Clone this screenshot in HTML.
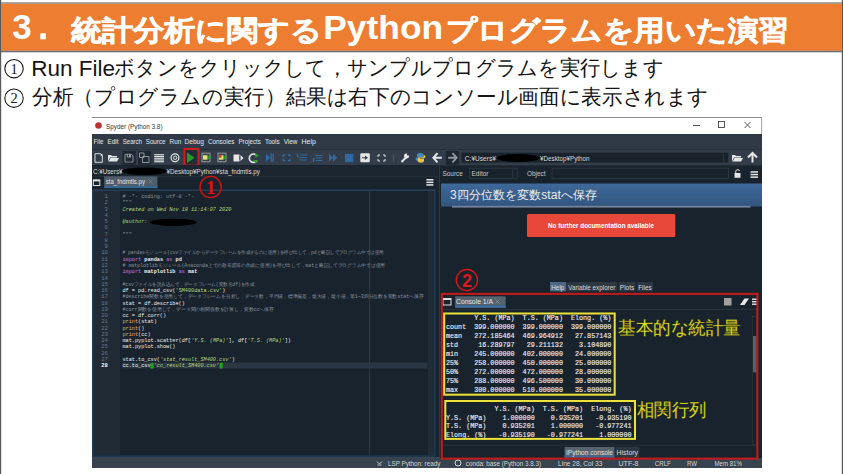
<!DOCTYPE html>
<html><head><meta charset="utf-8">
<style>
html,body{margin:0;padding:0;}
body{width:843px;height:474px;position:relative;overflow:hidden;background:#fff;font-family:"Liberation Sans",sans-serif;}
.a{position:absolute;}
</style></head><body>
<div class="a" style="left:0;top:0;width:1px;height:474px;background:#595959"></div>
<div class="a" style="left:842px;top:0;width:1px;height:474px;background:#595959"></div>
<svg class="a" style="left:0;top:0" width="843" height="474" viewBox="0 0 843 474"><rect x="0" y="0" width="1.2" height="474" fill="#5a5a5a" />
<rect x="841.8" y="0" width="1.2" height="474" fill="#5a5a5a" />
<rect x="1" y="2.3" width="841" height="1.5" fill="#858585" />
<rect x="1" y="3.8" width="841" height="47" fill="#ED7D31" />
<rect x="1" y="50.7" width="841" height="1.6" fill="#6f6f6f" />
<text x="12.3" y="39.4" font-family="Liberation Sans" font-size="35" fill="#ffffff" font-weight="bold">3</text>
<rect x="40.3" y="33.3" width="5.6" height="6" fill="#ffffff" />
<g transform="translate(70.8,39.6) scale(1,0.92)"><text x="0" y="0" font-family="Liberation Sans" font-size="30.5" fill="#ffffff" font-weight="bold" stroke="#ffffff" stroke-width="0.6" textLength="251" lengthAdjust="spacingAndGlyphs">統計分析に関する</text></g>
<text x="323.2" y="39.4" font-family="Liberation Sans" font-size="34" fill="#ffffff" font-weight="bold" textLength="120" lengthAdjust="spacingAndGlyphs">Python</text>
<g transform="translate(445.8,39.6) scale(1,0.92)"><text x="0" y="0" font-family="Liberation Sans" font-size="30.5" fill="#ffffff" font-weight="bold" stroke="#ffffff" stroke-width="0.6" textLength="342.5" lengthAdjust="spacingAndGlyphs">プログラムを用いた演習</text></g>
<circle cx="14" cy="68.7" r="9.2" fill="none" stroke="#1a1a1a" stroke-width="1.1"/>
<text x="14" y="73.6" font-family="Liberation Serif" font-size="14.5" fill="#1a1a1a" text-anchor="middle">1</text>
<circle cx="14" cy="98.2" r="9.2" fill="none" stroke="#1a1a1a" stroke-width="1.1"/>
<text x="14" y="103.1" font-family="Liberation Serif" font-size="14.5" fill="#1a1a1a" text-anchor="middle">2</text>
<text x="31.2" y="75.8" font-family="Liberation Sans" font-size="22.5" fill="#141414" >Run File</text>
<text x="114" y="74.6" font-family="Liberation Sans" font-size="20.8" fill="#141414" textLength="550" lengthAdjust="spacingAndGlyphs">ボタンをクリックして，サンプルプログラムを実行します</text>
<text x="32" y="104.4" font-family="Liberation Sans" font-size="20.8" fill="#141414" textLength="677" lengthAdjust="spacingAndGlyphs">分析（プログラムの実行）結果は右下のコンソール画面に表示されます</text>
<rect x="92" y="117" width="670" height="1" fill="#8c8c8c" />
<rect x="92" y="118" width="670" height="16" fill="#ffffff" />
<rect x="761.2" y="117" width="0.9" height="17" fill="#9a9a9a" />
<circle cx="98.5" cy="125.5" r="3.3" fill="#b83535"/>
<text x="106" y="128.6" font-family="Liberation Sans" font-size="7.3" fill="#333" textLength="56.5" lengthAdjust="spacingAndGlyphs">Spyder (Python 3.8)</text>
<rect x="693" y="125" width="7" height="0.9" fill="#444" />
<rect x="718.5" y="121.5" width="6" height="6" fill="none" stroke="#444" stroke-width="0.9"/>
<path d="M744.5 122 L750.5 128 M750.5 122 L744.5 128" fill="none" stroke="#444" stroke-width="0.9" />
<rect x="92" y="134" width="670" height="15" fill="#2f3a46" />
<rect x="92" y="149" width="670" height="1" fill="#27313b" />
<rect x="92" y="150" width="670" height="15" fill="#323d49" />
<text x="93.6" y="144.3" font-family="Liberation Sans" font-size="7.2" fill="#e8e8e8" textLength="9.8" lengthAdjust="spacingAndGlyphs">File</text>
<text x="107.5" y="144.3" font-family="Liberation Sans" font-size="7.2" fill="#e8e8e8" textLength="11" lengthAdjust="spacingAndGlyphs">Edit</text>
<text x="122.7" y="144.3" font-family="Liberation Sans" font-size="7.2" fill="#e8e8e8" textLength="19.3" lengthAdjust="spacingAndGlyphs">Search</text>
<text x="145.8" y="144.3" font-family="Liberation Sans" font-size="7.2" fill="#e8e8e8" textLength="19.6" lengthAdjust="spacingAndGlyphs">Source</text>
<text x="169.6" y="144.3" font-family="Liberation Sans" font-size="7.2" fill="#e8e8e8" textLength="11.6" lengthAdjust="spacingAndGlyphs">Run</text>
<text x="184.4" y="144.3" font-family="Liberation Sans" font-size="7.2" fill="#e8e8e8" textLength="19.6" lengthAdjust="spacingAndGlyphs">Debug</text>
<text x="208" y="144.3" font-family="Liberation Sans" font-size="7.2" fill="#e8e8e8" textLength="26.3" lengthAdjust="spacingAndGlyphs">Consoles</text>
<text x="238.4" y="144.3" font-family="Liberation Sans" font-size="7.2" fill="#e8e8e8" textLength="22.6" lengthAdjust="spacingAndGlyphs">Projects</text>
<text x="265" y="144.3" font-family="Liberation Sans" font-size="7.2" fill="#e8e8e8" textLength="14.6" lengthAdjust="spacingAndGlyphs">Tools</text>
<text x="283.7" y="144.3" font-family="Liberation Sans" font-size="7.2" fill="#e8e8e8" textLength="13.7" lengthAdjust="spacingAndGlyphs">View</text>
<text x="301.5" y="144.3" font-family="Liberation Sans" font-size="7.2" fill="#e8e8e8" textLength="14.5" lengthAdjust="spacingAndGlyphs">Help</text>
<path d="M95 153.7 H100.8 L102.3 155.2 V162.3 H95 Z" fill="none" stroke="#d8dcdf" stroke-width="1" />
<rect x="100.6" y="154" width="1.8" height="1.8" fill="#e6e6e6" />
<path d="M108 155 H111 L112 156 H117 V157.5 H110 L108 161.5 Z" fill="#e6e6e6" stroke="none" stroke-width="1" />
<path d="M110.5 158 H119 L117 161.5 H108.5 Z" fill="#e6e6e6" stroke="none" stroke-width="1" />
<rect x="122.6" y="151" width="13.1" height="13.6" fill="#1d2731" />
<rect x="138" y="151" width="13.1" height="13.6" fill="#1d2731" />
<path d="M125 154.3 H131.5 L133 155.8 V162 H125 Z" fill="none" stroke="#9aa0a6" stroke-width="0.9" />
<rect x="126.8" y="154.3" width="4.2" height="3.2" fill="#9aa0a6" />
<rect x="127.8" y="154.8" width="1.2" height="1.8" fill="#1d2731" />
<rect x="126.8" y="160" width="4.6" height="1.4" fill="#2a2f35" />
<path d="M139.5 153 H144 V157.5 H139.5 Z M142.5 156.5 H149 V162.5 H142.5 Z" fill="none" stroke="#9aa0a6" stroke-width="0.9" />
<rect x="154.2" y="154.2" width="9.8" height="1.1" fill="#e6e6e6" />
<rect x="154.2" y="155.95" width="9.8" height="1.1" fill="#e6e6e6" />
<rect x="154.2" y="157.7" width="9.8" height="1.1" fill="#e6e6e6" />
<rect x="154.2" y="159.45" width="9.8" height="1.1" fill="#e6e6e6" />
<rect x="154.2" y="161.2" width="9.8" height="1.1" fill="#e6e6e6" />
<circle cx="175" cy="157.8" r="3.9" fill="none" stroke="#e6e6e6" stroke-width="1.2"/>
<circle cx="175.2" cy="157.8" r="1.7" fill="none" stroke="#e6e6e6" stroke-width="1"/>
<rect x="184.5" y="149" width="14" height="16.5" fill="#222c36" />
<path d="M187 152.5 L194.5 157.8 L187 163 Z" fill="#2a9a2a" stroke="none" stroke-width="1" />
<rect x="184.5" y="149" width="14" height="16.5" fill="none" stroke="#cc1c1c" stroke-width="2"/>
<rect x="202.0" y="153.2" width="8" height="8.5" fill="none" stroke="#9a9a9a" stroke-width="1"/>
<rect x="203.0" y="155.2" width="4.5" height="4.5" fill="#e8e07a" />
<path d="M208.0 155.5 L211.0 157.5 L208.0 159.5 Z" fill="#22a022" stroke="none" stroke-width="1" />
<rect x="218.0" y="153.2" width="8" height="8.5" fill="none" stroke="#9a9a9a" stroke-width="1"/>
<rect x="219.0" y="155.2" width="4.5" height="4.5" fill="#e8e07a" />
<rect x="219.0" y="155.2" width="2.5" height="2.5" fill="#e02a2a" />
<path d="M224.0 155.5 L227.0 157.5 L224.0 159.5 Z" fill="#22a022" stroke="none" stroke-width="1" />
<rect x="233.5" y="154.5" width="6" height="7" fill="#e6e6e6" />
<rect x="239.5" y="156" width="1.2" height="4" fill="#2e3944" />
<path d="M240.5 155 L243.5 158 L240.5 161 Z" fill="#e6e6e6" stroke="none" stroke-width="1" />
<path d="M257 156 A4.2 4.2 0 1 0 257 160.5" fill="none" stroke="#e6e6e6" stroke-width="1.6" />
<path d="M255 153 L259 155.5 L255.5 158 Z" fill="#22a022" stroke="none" stroke-width="1" />
<path d="M252.5 160 L257.5 160 L256 163 Z" fill="#22a022" stroke="none" stroke-width="1" />
<path d="M266 153.5 L270 157.8 L266 162 Z" fill="#2d6aa3" stroke="none" stroke-width="1" />
<rect x="270.5" y="153.5" width="1.3" height="8.5" fill="#2d6aa3" />
<rect x="272.5" y="153.5" width="1.3" height="8.5" fill="#2d6aa3" />
<path d="M283 155 H285.5 M283 155 V157 M283 160.5 V158.5 M283 160.5 H285.5 M288 155 H290 V156.5 M288 160.5 H290 V159" fill="none" stroke="#2d6aa3" stroke-width="1.3" />
<path d="M297.5 153.5 V157 H299 M299.5 155 H307 M299.5 157.5 H307 M299.5 160 H307" fill="none" stroke="#2d6aa3" stroke-width="1.2" />
<path d="M313.5 162 V158.5 H315 M315.5 155.5 H322.5 M315.5 158 H322.5 M315.5 160.5 H322.5" fill="none" stroke="#2d6aa3" stroke-width="1.2" />
<path d="M329 153.5 L333 157.8 L329 162 Z M333 153.5 L337 157.8 L333 162 Z" fill="#2d6aa3" stroke="none" stroke-width="1" />
<rect x="345" y="154" width="8.2" height="8.2" fill="#2d6aa3" />
<rect x="360.3" y="153.2" width="9.5" height="9" fill="#e6e6e6" rx="1.2"/>
<path d="M365 155.5 L368 157.7 L365 160 Z M362 157.2 H365 V158.2 H362Z" fill="#2e3944" stroke="none" stroke-width="1" />
<path d="M378 155 L380 155 M378 155 L378 157 M385 155 L383 155 M385 155 L385 157 M378 161 L380 161 M378 161 L378 159 M385 161 L383 161 M385 161 L385 159" fill="none" stroke="#e6e6e6" stroke-width="1" />
<rect x="393.3" y="154.5" width="0.8" height="7" fill="#55606a" />
<path d="M401.5 162 L406 157.5" fill="none" stroke="#e6e6e6" stroke-width="2" />
<circle cx="406.5" cy="156" r="2.5" fill="#e6e6e6"/>
<circle cx="408" cy="154.5" r="1.1" fill="#2e3944"/>
<path d="M420.5 153 C417 153 417 154 417 155.5 V157 H421 V157.6 H416.6 C415.2 157.6 415.5 160 416.2 160.5 H417.5 V159 C417.5 158.5 418 158 418.5 158 H422 C422.8 158 423.5 157.5 423.5 156.5 V155 C423.5 153.5 422.2 153 420.5 153 Z" fill="#4a86c0" stroke="none" stroke-width="1" />
<path d="M420.5 162.6 C424 162.6 424 161.6 424 160 V158.6 H420 V158 H424.4 C425.8 158 425.5 155.6 424.8 155.2 H423.5 V156.6 C423.5 157.2 423 157.6 422.5 157.6 H419 C418.2 157.6 417.5 158.2 417.5 159.2 V160.6 C417.5 162.1 418.8 162.6 420.5 162.6 Z" fill="#e8c840" stroke="none" stroke-width="1" />
<path d="M437.5 153.2 L433.4 157.8 L437.5 162.4 M433.8 157.8 H441.8" fill="none" stroke="#e6e6e6" stroke-width="2" />
<rect x="445.8" y="151" width="13.1" height="13.6" fill="#1d2731" />
<path d="M452.5 153.2 L456.6 157.8 L452.5 162.4 M456.2 157.8 H448.2" fill="none" stroke="#8f969c" stroke-width="2" />
<rect x="461.3" y="152.7" width="267" height="10.1" fill="#1a232c" stroke="#2a3540" stroke-width="0.6"/>
<rect x="723.5" y="153.5" width="0.6" height="8.5" fill="#3a4550" />
<text x="464.8" y="160.8" font-family="Liberation Sans" font-size="6.6" fill="#d8d8d8" >C:¥Users¥</text>
<ellipse cx="518.3" cy="158" rx="21.5" ry="4" fill="#000"/>
<text x="540" y="160.8" font-family="Liberation Sans" font-size="6.6" fill="#d8d8d8" textLength="49.5" lengthAdjust="spacingAndGlyphs">¥Desktop¥Python</text>
<path d="M732 155 H735 L736 156 H741 V157.5 H734 L732 161.5 Z" fill="#e6e6e6" stroke="none" stroke-width="1" />
<path d="M734.5 158 H743 L741 161.5 H732.5 Z" fill="#e6e6e6" stroke="none" stroke-width="1" />
<path d="M748 157.5 L752.5 153 L757 157.5 M752.5 153.5 V162.5" fill="none" stroke="#e6e6e6" stroke-width="2" />
<rect x="92" y="165" width="345.5" height="293" fill="#19232d" />
<rect x="435.5" y="165" width="4.5" height="292" fill="#1b252f" />
<rect x="439" y="165" width="1" height="292" fill="#2c3742" />
<rect x="440" y="165" width="322" height="293" fill="#19232d" />
<rect x="92" y="457" width="670" height="10.5" fill="#37434f" />
<rect x="92" y="467" width="670" height="0.8" fill="#27303a" />
<rect x="92" y="166" width="345.5" height="10" fill="#1c2630" />
<text x="93" y="173.6" font-family="Liberation Sans" font-size="6.3" fill="#dcdcdc" textLength="29.5" lengthAdjust="spacingAndGlyphs">C:¥Users¥</text>
<ellipse cx="144.5" cy="171.3" rx="22.5" ry="3.8" fill="#000"/>
<text x="166.5" y="173.6" font-family="Liberation Sans" font-size="6.3" fill="#dcdcdc" textLength="93.5" lengthAdjust="spacingAndGlyphs">¥Desktop¥Python¥sta_fndmtls.py</text>
<rect x="92" y="176" width="345.5" height="0.6" fill="#2a3440" />
<rect x="93.3" y="180" width="6.5" height="5.5" fill="none" stroke="#e0e0e0" stroke-width="1"/>
<rect x="93.3" y="179.6" width="6.5" height="1.8" fill="#e0e0e0" />
<rect x="104.2" y="176.3" width="53.2" height="11.8" fill="#4f5c69" />
<rect x="104.2" y="186.2" width="53.2" height="1.9" fill="#2f6a9a" />
<text x="105.7" y="184.2" font-family="Liberation Sans" font-size="6.4" fill="#e4e4e4" textLength="39.3" lengthAdjust="spacingAndGlyphs">sta_fndmtls.py</text>
<path d="M148.5 179.5 L152.5 183.5 M152.5 179.5 L148.5 183.5" fill="none" stroke="#7d8893" stroke-width="0.7" />
<rect x="426.4" y="179.0" width="7" height="1.5" fill="#e6e6e6" />
<rect x="426.4" y="181.6" width="7" height="1.5" fill="#e6e6e6" />
<rect x="426.4" y="184.2" width="7" height="1.5" fill="#e6e6e6" />
<rect x="92" y="189.5" width="343.5" height="1.5" fill="#26405a" />
<rect x="92" y="191" width="1.8" height="265.5" fill="#1f3c55" />
<rect x="433.8" y="191" width="1.6" height="265.5" fill="#1f3c55" />
<rect x="428" y="191" width="5.8" height="265.5" fill="#222c36" />
<rect x="369" y="191" width="0.7" height="265.5" fill="#3a4652" />
<rect x="94" y="191" width="26" height="264.5" fill="#212b36" />
<rect x="92" y="455.3" width="343.5" height="1.7" fill="#1e3850" />
<rect x="122" y="362.4" width="305.5" height="6" fill="#2a3642" />
<text x="107.8" y="198.0" font-family="Liberation Mono" font-size="5.5" fill="#6d7883" text-anchor="end">1</text>
<text x="122.5" y="198.0" font-family="Liberation Mono" font-size="5.2" fill="#8a949e"  xml:space="preserve"># -*- coding: utf-8 -*-</text>
<text x="107.8" y="204.27" font-family="Liberation Mono" font-size="5.5" fill="#6d7883" text-anchor="end">2</text>
<text x="122.5" y="204.27" font-family="Liberation Mono" font-size="5.2" fill="#8a949e"  xml:space="preserve">"""</text>
<text x="107.8" y="210.54" font-family="Liberation Mono" font-size="5.5" fill="#6d7883" text-anchor="end">3</text>
<text x="122.5" y="210.54" font-family="Liberation Mono" font-size="5.2" fill="#b7d97a" font-style="italic" xml:space="preserve">Created on Wed Nov 18 11:14:07 2020</text>
<text x="107.8" y="216.81" font-family="Liberation Mono" font-size="5.5" fill="#6d7883" text-anchor="end">4</text>
<text x="107.8" y="223.07999999999998" font-family="Liberation Mono" font-size="5.5" fill="#6d7883" text-anchor="end">5</text>
<text x="122.5" y="223.08" font-family="Liberation Mono" font-size="5.2" fill="#9ad46a" font-style="italic" xml:space="preserve">@author: </text>
<text x="107.8" y="229.35" font-family="Liberation Mono" font-size="5.5" fill="#6d7883" text-anchor="end">6</text>
<text x="107.8" y="235.62" font-family="Liberation Mono" font-size="5.5" fill="#6d7883" text-anchor="end">7</text>
<text x="122.5" y="235.62" font-family="Liberation Mono" font-size="5.2" fill="#8a949e"  xml:space="preserve">"""</text>
<text x="107.8" y="241.89" font-family="Liberation Mono" font-size="5.5" fill="#6d7883" text-anchor="end">8</text>
<text x="107.8" y="248.16" font-family="Liberation Mono" font-size="5.5" fill="#6d7883" text-anchor="end">9</text>
<text x="107.8" y="254.43" font-family="Liberation Mono" font-size="5.5" fill="#6d7883" text-anchor="end">10</text>
<text x="122.5" y="254.43" font-family="Liberation Mono" font-size="5.2" fill="#8a949e"  textLength="261.3" lengthAdjust="spacingAndGlyphs" xml:space="preserve"># pandasモジュール(csvファイルからデータフレームを作成するのに使用)を呼び出して，pdと略記してプログラム中では使用</text>
<text x="107.8" y="260.7" font-family="Liberation Mono" font-size="5.5" fill="#6d7883" text-anchor="end">11</text>
<text x="122.5" y="260.7" font-family="Liberation Mono" font-size="5.2" fill="#c670e0"  xml:space="preserve">import</text>
<text x="141.22" y="260.7" font-family="Liberation Mono" font-size="5.2" fill="#f0f0f0" font-weight="bold" xml:space="preserve"> pandas </text>
<text x="166.18" y="260.7" font-family="Liberation Mono" font-size="5.2" fill="#c670e0"  xml:space="preserve">as</text>
<text x="172.42" y="260.7" font-family="Liberation Mono" font-size="5.2" fill="#f0f0f0" font-weight="bold" xml:space="preserve"> pd</text>
<text x="107.8" y="266.97" font-family="Liberation Mono" font-size="5.5" fill="#6d7883" text-anchor="end">12</text>
<text x="122.5" y="266.97" font-family="Liberation Mono" font-size="5.2" fill="#8a949e"  textLength="262.5" lengthAdjust="spacingAndGlyphs" xml:space="preserve"># matplotlibモジュール(Anaconda上での散布図等の作成に使用)を呼び出して，matと略記してプログラム中では使用</text>
<text x="107.8" y="273.24" font-family="Liberation Mono" font-size="5.5" fill="#6d7883" text-anchor="end">13</text>
<text x="122.5" y="273.24" font-family="Liberation Mono" font-size="5.2" fill="#c670e0"  xml:space="preserve">import</text>
<text x="141.22" y="273.24" font-family="Liberation Mono" font-size="5.2" fill="#f0f0f0" font-weight="bold" xml:space="preserve"> matplotlib </text>
<text x="178.66" y="273.24" font-family="Liberation Mono" font-size="5.2" fill="#c670e0"  xml:space="preserve">as</text>
<text x="184.9" y="273.24" font-family="Liberation Mono" font-size="5.2" fill="#f0f0f0" font-weight="bold" xml:space="preserve"> mat</text>
<text x="107.8" y="279.51" font-family="Liberation Mono" font-size="5.5" fill="#6d7883" text-anchor="end">14</text>
<text x="107.8" y="285.78" font-family="Liberation Mono" font-size="5.5" fill="#6d7883" text-anchor="end">15</text>
<text x="122.5" y="285.78" font-family="Liberation Mono" font-size="5.2" fill="#8a949e"  textLength="132" lengthAdjust="spacingAndGlyphs" xml:space="preserve">#csvファイルを読み込んで，データフレーム(変数名df)を作成</text>
<text x="107.8" y="292.05" font-family="Liberation Mono" font-size="5.5" fill="#6d7883" text-anchor="end">16</text>
<text x="122.5" y="292.05" font-family="Liberation Mono" font-size="5.2" fill="#f0f0f0"  xml:space="preserve">df = pd.read_csv(</text>
<text x="175.54" y="292.05" font-family="Liberation Mono" font-size="5.2" fill="#b7d97a"  xml:space="preserve">'SM400data.csv'</text>
<text x="222.34" y="292.05" font-family="Liberation Mono" font-size="5.2" fill="#f0f0f0"  xml:space="preserve">)</text>
<text x="107.8" y="298.32" font-family="Liberation Mono" font-size="5.5" fill="#6d7883" text-anchor="end">17</text>
<text x="122.5" y="298.32" font-family="Liberation Mono" font-size="5.2" fill="#8a949e"  textLength="301" lengthAdjust="spacingAndGlyphs" xml:space="preserve">#describe関数を使用して，データフレームを分析し，データ数，平均値，標準偏差，最大値，最小値，第1~3四分位数を変数statへ保存</text>
<text x="107.8" y="304.59" font-family="Liberation Mono" font-size="5.5" fill="#6d7883" text-anchor="end">18</text>
<text x="122.5" y="304.59" font-family="Liberation Mono" font-size="5.2" fill="#f0f0f0"  xml:space="preserve">stat = df.describe()</text>
<text x="107.8" y="310.86" font-family="Liberation Mono" font-size="5.5" fill="#6d7883" text-anchor="end">19</text>
<text x="122.5" y="310.86" font-family="Liberation Mono" font-size="5.2" fill="#8a949e"  textLength="151.4" lengthAdjust="spacingAndGlyphs" xml:space="preserve">#corr関数を使用して，データ間の相関係数を計算し，変数ccへ保存</text>
<text x="107.8" y="317.13" font-family="Liberation Mono" font-size="5.5" fill="#6d7883" text-anchor="end">20</text>
<text x="122.5" y="317.13" font-family="Liberation Mono" font-size="5.2" fill="#f0f0f0"  xml:space="preserve">cc = df.corr()</text>
<text x="107.8" y="323.4" font-family="Liberation Mono" font-size="5.5" fill="#6d7883" text-anchor="end">21</text>
<text x="122.5" y="323.4" font-family="Liberation Mono" font-size="5.2" fill="#f5a962"  xml:space="preserve">print</text>
<text x="138.1" y="323.4" font-family="Liberation Mono" font-size="5.2" fill="#f0f0f0"  xml:space="preserve">(stat)</text>
<text x="107.8" y="329.66999999999996" font-family="Liberation Mono" font-size="5.5" fill="#6d7883" text-anchor="end">22</text>
<text x="122.5" y="329.67" font-family="Liberation Mono" font-size="5.2" fill="#f5a962"  xml:space="preserve">print</text>
<text x="138.1" y="329.67" font-family="Liberation Mono" font-size="5.2" fill="#f0f0f0"  xml:space="preserve">()</text>
<text x="107.8" y="335.94" font-family="Liberation Mono" font-size="5.5" fill="#6d7883" text-anchor="end">23</text>
<text x="122.5" y="335.94" font-family="Liberation Mono" font-size="5.2" fill="#f5a962"  xml:space="preserve">print</text>
<text x="138.1" y="335.94" font-family="Liberation Mono" font-size="5.2" fill="#f0f0f0"  xml:space="preserve">(cc)</text>
<text x="107.8" y="342.21" font-family="Liberation Mono" font-size="5.5" fill="#6d7883" text-anchor="end">24</text>
<text x="122.5" y="342.21" font-family="Liberation Mono" font-size="5.2" fill="#f0f0f0"  xml:space="preserve">mat.pyplot.scatter(df[</text>
<text x="191.14" y="342.21" font-family="Liberation Mono" font-size="5.2" fill="#b7d97a" font-style="italic" xml:space="preserve">'Y.S. (MPa)'</text>
<text x="228.58" y="342.21" font-family="Liberation Mono" font-size="5.2" fill="#f0f0f0"  xml:space="preserve">], df[</text>
<text x="247.3" y="342.21" font-family="Liberation Mono" font-size="5.2" fill="#b7d97a" font-style="italic" xml:space="preserve">'T.S. (MPa)'</text>
<text x="284.74" y="342.21" font-family="Liberation Mono" font-size="5.2" fill="#f0f0f0"  xml:space="preserve">])</text>
<text x="107.8" y="348.48" font-family="Liberation Mono" font-size="5.5" fill="#6d7883" text-anchor="end">25</text>
<text x="122.5" y="348.48" font-family="Liberation Mono" font-size="5.2" fill="#f0f0f0"  xml:space="preserve">mat.pyplot.show()</text>
<text x="107.8" y="354.75" font-family="Liberation Mono" font-size="5.5" fill="#6d7883" text-anchor="end">26</text>
<text x="107.8" y="361.02" font-family="Liberation Mono" font-size="5.5" fill="#6d7883" text-anchor="end">27</text>
<text x="122.5" y="361.02" font-family="Liberation Mono" font-size="5.2" fill="#f0f0f0"  xml:space="preserve">stat.to_csv(</text>
<text x="159.94" y="361.02" font-family="Liberation Mono" font-size="5.2" fill="#b7d97a" font-style="italic" xml:space="preserve">'stat_result_SM400.csv'</text>
<text x="231.7" y="361.02" font-family="Liberation Mono" font-size="5.2" fill="#f0f0f0"  xml:space="preserve">)</text>
<text x="107.8" y="367.28999999999996" font-family="Liberation Mono" font-size="5.5" fill="#ffffff" text-anchor="end" font-weight="bold">28</text>
<text x="122.5" y="367.29" font-family="Liberation Mono" font-size="5.2" fill="#f0f0f0"  xml:space="preserve">cc.to_csv</text>
<text x="150.58" y="367.29" font-family="Liberation Mono" font-size="5.2" fill="#f0f0f0"  xml:space="preserve">(</text>
<text x="153.7" y="367.29" font-family="Liberation Mono" font-size="5.2" fill="#b7d97a" font-style="italic" xml:space="preserve">'cc_result_SM400.csv'</text>
<text x="219.22" y="367.29" font-family="Liberation Mono" font-size="5.2" fill="#f0f0f0"  xml:space="preserve">)</text>
<ellipse cx="173.3" cy="222.3" rx="23.5" ry="3.6" fill="#000"/>
<rect x="150.5" y="362.9" width="3.2" height="5.6" fill="#1fa01f" />
<rect x="219.6" y="362.9" width="3.2" height="5.6" fill="#1fa01f" />
<rect x="440" y="165" width="322" height="293" fill="#19232d" />
<rect x="440" y="165.5" width="322" height="0.6" fill="#2a3440" />
<text x="442.5" y="176" font-family="Liberation Sans" font-size="6.5" fill="#c8c8c8" textLength="20.4" lengthAdjust="spacingAndGlyphs">Source</text>
<rect x="469.4" y="168.2" width="47.8" height="10.2" fill="#19232d" stroke="#2f3b46" stroke-width="0.8"/>
<text x="471.5" y="176" font-family="Liberation Sans" font-size="6.5" fill="#c8c8c8" textLength="17" lengthAdjust="spacingAndGlyphs">Editor</text>
<rect x="512.5" y="169" width="0.6" height="8.6" fill="#3a4550" />
<text x="527" y="176" font-family="Liberation Sans" font-size="6.5" fill="#c8c8c8" textLength="18.6" lengthAdjust="spacingAndGlyphs">Object</text>
<rect x="552" y="168.2" width="176.4" height="10.2" fill="#19232d" stroke="#2f3b46" stroke-width="0.8"/>
<rect x="734.5" y="173" width="6" height="4.8" fill="#e6e6e6" />
<path d="M735.8 173 V171 A2 2 0 0 1 739.6 171" fill="none" stroke="#e6e6e6" stroke-width="1" />
<rect x="750.5" y="171.2" width="7.5" height="1.5" fill="#e6e6e6" />
<rect x="750.5" y="173.79999999999998" width="7.5" height="1.5" fill="#e6e6e6" />
<rect x="750.5" y="176.39999999999998" width="7.5" height="1.5" fill="#e6e6e6" />
<defs><linearGradient id="hg" x1="0" y1="0" x2="0" y2="1"><stop offset="0" stop-color="#3e6999"/><stop offset="1" stop-color="#32557f"/></linearGradient></defs>
<rect x="441" y="183.5" width="321" height="23" fill="url(#hg)" />
<rect x="452" y="205.8" width="298.5" height="1.8" fill="#76849a" />
<text x="450" y="199.2" font-family="Liberation Sans" font-size="12" fill="#ececec" textLength="147" lengthAdjust="spacingAndGlyphs">3四分位数を変数statへ保存</text>
<rect x="527" y="214" width="148.3" height="23" fill="#e8483a" rx="1.5"/>
<text x="601" y="228.3" font-family="Liberation Sans" font-size="6.6" fill="#ffffff" text-anchor="middle" font-weight="bold" textLength="106" lengthAdjust="spacingAndGlyphs">No further documentation available</text>
<circle cx="466.9" cy="280.1" r="10.6" fill="none" stroke="#d41818" stroke-width="1.35"/>
<text x="467" y="286.6" font-family="Liberation Sans" font-size="17.5" fill="#e01a1a" text-anchor="middle" font-weight="bold">2</text>
<rect x="550" y="282" width="16.2" height="9.4" fill="#4d6884" />
<text x="551.3" y="289.8" font-family="Liberation Sans" font-size="6.3" fill="#e0e0e0" textLength="13" lengthAdjust="spacingAndGlyphs">Help</text>
<rect x="567" y="282" width="50.1" height="9.4" fill="#2c3742" />
<text x="568.3" y="289.8" font-family="Liberation Sans" font-size="6.3" fill="#d8d8d8" textLength="47" lengthAdjust="spacingAndGlyphs">Variable explorer</text>
<rect x="618.6" y="282" width="17" height="9.4" fill="#2c3742" />
<text x="619.8" y="289.8" font-family="Liberation Sans" font-size="6.3" fill="#d8d8d8" textLength="14.5" lengthAdjust="spacingAndGlyphs">Plots</text>
<rect x="637.1" y="282" width="16.2" height="9.4" fill="#2c3742" />
<text x="638.2" y="289.8" font-family="Liberation Sans" font-size="6.3" fill="#d8d8d8" textLength="13.5" lengthAdjust="spacingAndGlyphs">Files</text>
<rect x="441" y="309" width="317" height="0.7" fill="#2f3a44" />
<rect x="443" y="298.5" width="8" height="6.5" fill="none" stroke="#e0e0e0" stroke-width="1"/>
<rect x="443" y="298.2" width="8" height="1.8" fill="#e0e0e0" />
<rect x="455.2" y="296.3" width="50.4" height="11.7" fill="#56636f" />
<rect x="455.2" y="305.2" width="50.4" height="2.4" fill="#3a6b9b" />
<text x="456" y="304.2" font-family="Liberation Sans" font-size="6.6" fill="#e4e4e4" textLength="37" lengthAdjust="spacingAndGlyphs">Console 1/A</text>
<path d="M495.5 299.5 L499.5 303.5 M499.5 299.5 L495.5 303.5" fill="none" stroke="#8a95a0" stroke-width="0.7" />
<rect x="724" y="298" width="7.5" height="7.5" fill="#a0a0a0" />
<path d="M740 305 L744.5 298.5 L749 298.5 L744.5 305 Z" fill="#e6e6e6" stroke="none" stroke-width="1" />
<rect x="752" y="298.5" width="5.5" height="1.4" fill="#e6e6e6" />
<rect x="752" y="301.0" width="5.5" height="1.4" fill="#e6e6e6" />
<rect x="752" y="303.5" width="5.5" height="1.4" fill="#e6e6e6" />
<rect x="752.5" y="316.5" width="4" height="128" fill="#19232d" stroke="#2f3a44" stroke-width="0.6"/>
<rect x="753" y="336" width="3.4" height="36.3" fill="#55616d" />
<rect x="441" y="444.8" width="317" height="0.7" fill="#2f3a44" />
<text x="446" y="319.85" font-family="Liberation Mono" font-size="6.72" fill="#f2f2f2" stroke="#f2f2f2" stroke-width="0.12">&#160;&#160;&#160;&#160;&#160;&#160;&#160;Y.S.&#160;(MPa)&#160;&#160;T.S.&#160;(MPa)&#160;&#160;Elong.&#160;(%)</text>
<text x="446" y="328.90000000000003" font-family="Liberation Mono" font-size="6.72" fill="#f2f2f2" stroke="#f2f2f2" stroke-width="0.12">count&#160;&#160;399.000000&#160;&#160;399.000000&#160;&#160;399.000000</text>
<text x="446" y="337.95000000000005" font-family="Liberation Mono" font-size="6.72" fill="#f2f2f2" stroke="#f2f2f2" stroke-width="0.12">mean&#160;&#160;&#160;272.185464&#160;&#160;469.964912&#160;&#160;&#160;27.857143</text>
<text x="446" y="347.0" font-family="Liberation Mono" font-size="6.72" fill="#f2f2f2" stroke="#f2f2f2" stroke-width="0.12">std&#160;&#160;&#160;&#160;&#160;16.289797&#160;&#160;&#160;29.211132&#160;&#160;&#160;&#160;3.104890</text>
<text x="446" y="356.05" font-family="Liberation Mono" font-size="6.72" fill="#f2f2f2" stroke="#f2f2f2" stroke-width="0.12">min&#160;&#160;&#160;&#160;245.000000&#160;&#160;402.000000&#160;&#160;&#160;24.000000</text>
<text x="446" y="365.1" font-family="Liberation Mono" font-size="6.72" fill="#f2f2f2" stroke="#f2f2f2" stroke-width="0.12">25%&#160;&#160;&#160;&#160;258.000000&#160;&#160;450.000000&#160;&#160;&#160;25.000000</text>
<text x="446" y="374.15000000000003" font-family="Liberation Mono" font-size="6.72" fill="#f2f2f2" stroke="#f2f2f2" stroke-width="0.12">50%&#160;&#160;&#160;&#160;272.000000&#160;&#160;472.000000&#160;&#160;&#160;28.000000</text>
<text x="446" y="383.20000000000005" font-family="Liberation Mono" font-size="6.72" fill="#f2f2f2" stroke="#f2f2f2" stroke-width="0.12">75%&#160;&#160;&#160;&#160;288.000000&#160;&#160;496.500000&#160;&#160;&#160;30.000000</text>
<text x="446" y="392.25" font-family="Liberation Mono" font-size="6.72" fill="#f2f2f2" stroke="#f2f2f2" stroke-width="0.12">max&#160;&#160;&#160;&#160;300.000000&#160;&#160;510.000000&#160;&#160;&#160;35.000000</text>
<text x="446" y="410.6" font-family="Liberation Mono" font-size="6.72" fill="#f2f2f2" stroke="#f2f2f2" stroke-width="0.12">&#160;&#160;&#160;&#160;&#160;&#160;&#160;&#160;&#160;&#160;&#160;&#160;Y.S.&#160;(MPa)&#160;&#160;T.S.&#160;(MPa)&#160;&#160;Elong.&#160;(%)</text>
<text x="446" y="419.5" font-family="Liberation Mono" font-size="6.72" fill="#f2f2f2" stroke="#f2f2f2" stroke-width="0.12">Y.S.&#160;(MPa)&#160;&#160;&#160;&#160;1.000000&#160;&#160;&#160;&#160;0.935201&#160;&#160;&#160;-0.935190</text>
<text x="446" y="428.40000000000003" font-family="Liberation Mono" font-size="6.72" fill="#f2f2f2" stroke="#f2f2f2" stroke-width="0.12">T.S.&#160;(MPa)&#160;&#160;&#160;&#160;0.935201&#160;&#160;&#160;&#160;1.000000&#160;&#160;&#160;-0.977241</text>
<text x="446" y="437.3" font-family="Liberation Mono" font-size="6.72" fill="#f2f2f2" stroke="#f2f2f2" stroke-width="0.12">Elong.&#160;(%)&#160;&#160;&#160;-0.935190&#160;&#160;&#160;-0.977241&#160;&#160;&#160;&#160;1.000000</text>
<text x="446" y="311.5" font-family="Liberation Mono" font-size="6.72" fill="#e8e8e8" ></text>
<rect x="444.2" y="313.5" width="170.5" height="81.2" fill="none" stroke="#ece23a" stroke-width="2"/>
<rect x="445.3" y="401" width="189.7" height="37.9" fill="none" stroke="#ece23a" stroke-width="2"/>
<text x="618.2" y="333.5" font-family="Liberation Sans" font-size="17.5" fill="#f4ec1c" textLength="122.4" lengthAdjust="spacingAndGlyphs" stroke="#6a6a10" stroke-width="0.3">基本的な統計量</text>
<text x="636.9" y="416" font-family="Liberation Sans" font-size="17.5" fill="#f4ec1c" textLength="69.4" lengthAdjust="spacingAndGlyphs" stroke="#6a6a10" stroke-width="0.3">相関行列</text>
<rect x="564.6" y="447" width="49.8" height="10.6" fill="#56636f" />
<rect x="564.6" y="455.6" width="49.8" height="2" fill="#3a6b9b" />
<text x="566" y="455.3" font-family="Liberation Sans" font-size="6.4" fill="#e0e0e0" textLength="47" lengthAdjust="spacingAndGlyphs">IPython console</text>
<rect x="615.3" y="447" width="24" height="10.6" fill="#2c3742" />
<text x="616.5" y="455.3" font-family="Liberation Sans" font-size="6.4" fill="#d8d8d8" textLength="21.5" lengthAdjust="spacingAndGlyphs">History</text>
<rect x="441.8" y="293.9" width="315.6" height="164.7" fill="none" stroke="#c01b1b" stroke-width="2.1"/>
<text x="388" y="466" font-family="Liberation Sans" font-size="6.8" fill="#d6d6d6" textLength="52.3" lengthAdjust="spacingAndGlyphs">LSP Python: ready</text>
<text x="465.8" y="466" font-family="Liberation Sans" font-size="6.8" fill="#d6d6d6" textLength="75.2" lengthAdjust="spacingAndGlyphs">conda: base (Python 3.8.3)</text>
<text x="558" y="466" font-family="Liberation Sans" font-size="6.8" fill="#d6d6d6" textLength="44.4" lengthAdjust="spacingAndGlyphs">Line 28, Col 33</text>
<text x="618.5" y="466" font-family="Liberation Sans" font-size="6.8" fill="#d6d6d6" textLength="20" lengthAdjust="spacingAndGlyphs">UTF-8</text>
<text x="654.7" y="466" font-family="Liberation Sans" font-size="6.8" fill="#d6d6d6" textLength="16.2" lengthAdjust="spacingAndGlyphs">CRLF</text>
<text x="687" y="466" font-family="Liberation Sans" font-size="6.8" fill="#d6d6d6" textLength="10" lengthAdjust="spacingAndGlyphs">RW</text>
<text x="714.5" y="466" font-family="Liberation Sans" font-size="6.8" fill="#d6d6d6" textLength="27.4" lengthAdjust="spacingAndGlyphs">Mem 81%</text>
<path d="M377 461.5 L379.5 464 L382 461.5 M377.5 465 H381.5" fill="none" stroke="#d6d6d6" stroke-width="0.9" />
<circle cx="458" cy="463" r="3" fill="none" stroke="#d6d6d6" stroke-width="1"/>
<circle cx="210.6" cy="187" r="10.6" fill="none" stroke="#d01414" stroke-width="1.35"/>
<text x="210.6" y="194.3" font-family="Liberation Serif" font-size="19.5" fill="#e01010" text-anchor="middle" font-weight="bold">1</text></svg>
</body></html>
